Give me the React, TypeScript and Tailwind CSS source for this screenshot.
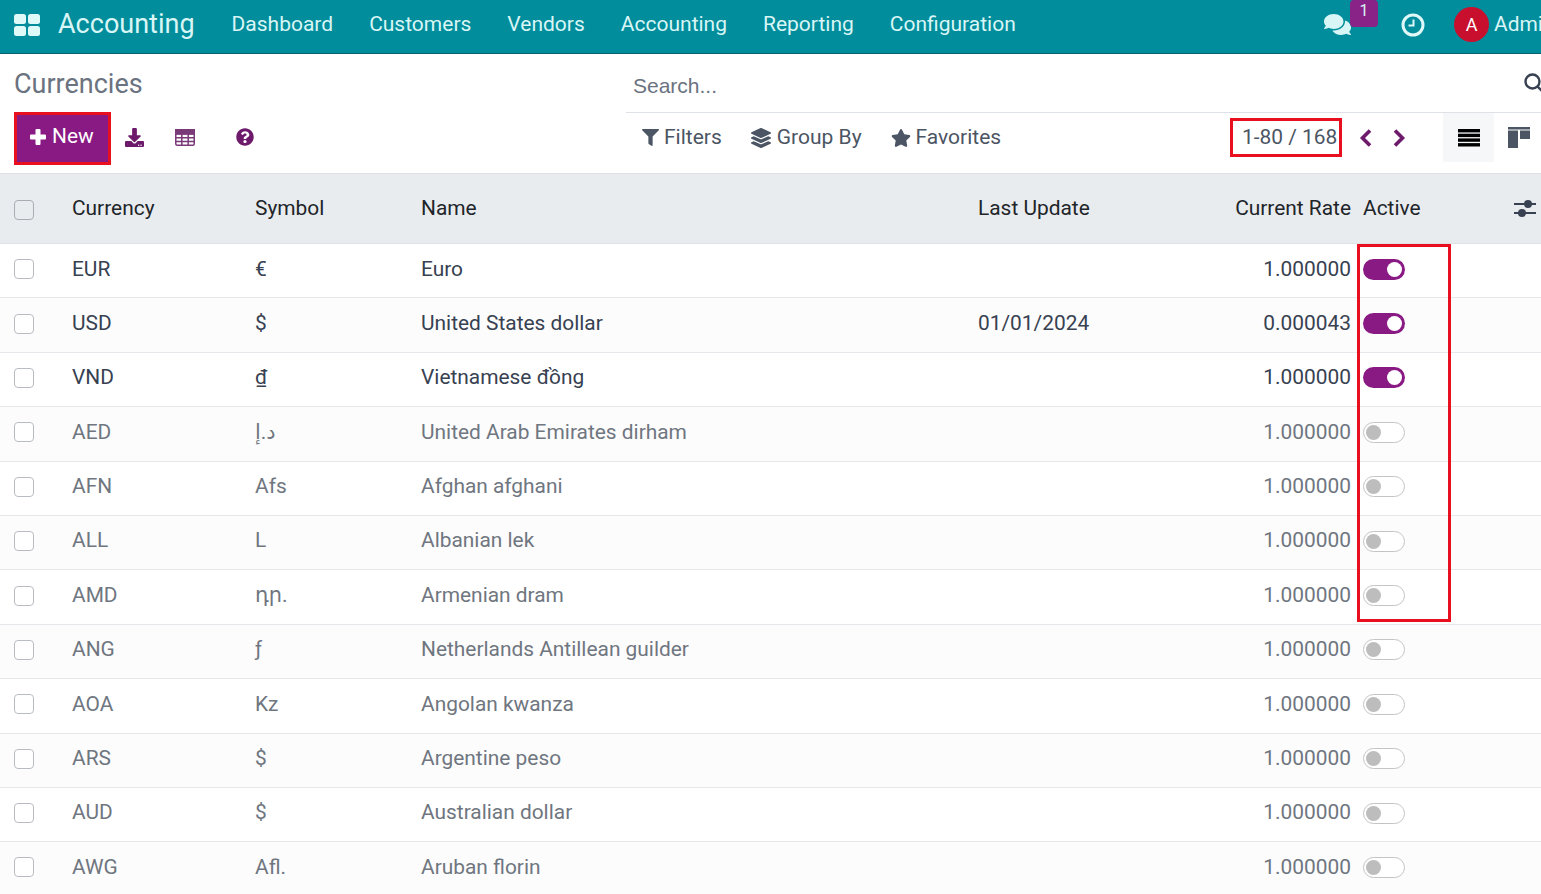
import { FaComments, FaDownload, FaFilter, FaLayerGroup, FaQuestionCircle, FaStar } from 'react-icons/fa'

const currencies = [
  { code: 'EUR', symbol: '€', name: 'Euro', update: '', rate: '1.000000', active: true },
  { code: 'USD', symbol: '$', name: 'United States dollar', update: '01/01/2024', rate: '0.000043', active: true },
  { code: 'VND', symbol: '₫', name: 'Vietnamese đồng', update: '', rate: '1.000000', active: true },
  { code: 'AED', symbol: 'د.إ', name: 'United Arab Emirates dirham', update: '', rate: '1.000000', active: false },
  { code: 'AFN', symbol: 'Afs', name: 'Afghan afghani', update: '', rate: '1.000000', active: false },
  { code: 'ALL', symbol: 'L', name: 'Albanian lek', update: '', rate: '1.000000', active: false },
  { code: 'AMD', symbol: 'դր.', name: 'Armenian dram', update: '', rate: '1.000000', active: false },
  { code: 'ANG', symbol: 'ƒ', name: 'Netherlands Antillean guilder', update: '', rate: '1.000000', active: false },
  { code: 'AOA', symbol: 'Kz', name: 'Angolan kwanza', update: '', rate: '1.000000', active: false },
  { code: 'ARS', symbol: '$', name: 'Argentine peso', update: '', rate: '1.000000', active: false },
  { code: 'AUD', symbol: '$', name: 'Australian dollar', update: '', rate: '1.000000', active: false },
  { code: 'AWG', symbol: 'Afl.', name: 'Aruban florin', update: '', rate: '1.000000', active: false },
]

const menu = ['Dashboard', 'Customers', 'Vendors', 'Accounting', 'Reporting', 'Configuration']

function Toggle({ on }: { on: boolean }) {
  return on ? (
    <div className="mb-[3px] flex h-[21px] w-[42px] items-center justify-end rounded-full bg-[#8a1a83] pr-[3px]">
      <div className="h-[15px] w-[15px] rounded-full bg-white" />
    </div>
  ) : (
    <div className="mb-[3px] flex h-[21px] w-[42px] items-center rounded-full border border-[#c4c4c4] bg-white pl-[2px]">
      <div className="h-[15px] w-[15px] rounded-full bg-[#bdbdbd]" />
    </div>
  )
}

function Navbar() {
  return (
    <div className="flex h-[54px] shrink-0 items-center border-b border-[#0b5f68] bg-[#018d9c] pb-[4px] text-[#d9f6f6]">
      <svg className="ml-[14px] shrink-0" width="26" height="22" viewBox="0 0 26 22" fill="#dff8f8">
        <rect x="0" y="0" width="12" height="10" rx="2.5" />
        <rect x="14" y="0" width="12" height="10" rx="2.5" />
        <rect x="0" y="12" width="12" height="10" rx="2.5" />
        <rect x="14" y="12" width="12" height="10" rx="2.5" />
      </svg>
      <div className="ml-[18px] mr-[37px] text-[27px]">Accounting</div>
      <div className="flex gap-[36px] text-[21px]">
        {menu.map((m) => (
          <div key={m}>{m}</div>
        ))}
      </div>
      <div className="ml-auto flex shrink-0 items-center">
        <div className="relative mr-[50px]">
          <FaComments size={27} />
          <div className="absolute left-[26px] top-[-11px] flex h-[27px] w-[28px] items-start justify-center rounded-[4px] bg-[#8a2387] text-[16px] leading-[22px]">
            1
          </div>
        </div>
        <svg className="mr-[29px]" width="24" height="24" viewBox="0 0 24 24" fill="none" stroke="#dff8f8" strokeWidth="3">
          <circle cx="12" cy="12" r="10" />
          <path d="M12.5 6.5v6h-5" strokeWidth="2" />
        </svg>
        <div className="flex h-[35px] w-[35px] items-center justify-center rounded-full bg-[#c8102e] text-[18px] text-white">A</div>
        <div className="ml-[5px] w-[47px] whitespace-nowrap text-[20.9px]">Admin</div>
      </div>
    </div>
  )
}

function ControlPanel() {
  return (
    <div className="flex h-[120px] shrink-0 border-b border-[#dee2e6] bg-white">
      <div className="w-[626px] shrink-0 pl-[14px]">
        <div className="mt-[13px] text-[27px] leading-[34px] text-[#6b7280]">Currencies</div>
        <div className="mt-[11px] flex items-center text-[#6e1a6b]">
          <div className="flex h-[53px] w-[97px] items-center gap-[6px] border-[3px] border-[#e8101e] bg-[#8a1a83] pb-[3px] pl-[13px] text-[20.9px] text-white">
            <svg width="16" height="16" viewBox="0 0 16 16" fill="#fff">
              <rect x="5.5" y="0" width="5" height="16" rx="1" />
              <rect x="0" y="5.5" width="16" height="5" rx="1" />
            </svg>
            New
          </div>
          <FaDownload className="mb-[3px] ml-[14px]" size={19} />
          <svg className="mb-[3px] ml-[31px]" width="20" height="17" viewBox="0 0 20 17" fill="none" stroke="#7a3a78" strokeWidth="1.5">
            <rect x="0.75" y="0.75" width="18.5" height="15.5" rx="1.5" />
            <path d="M0.75 5h18.5M0.75 8.7h18.5M0.75 12.4h18.5M6.8 5v11M13.2 5v11" />
            <rect x="0.75" y="0.75" width="18.5" height="4" fill="#7a3a78" />
          </svg>
          <FaQuestionCircle className="mb-[3px] ml-[41px]" size={18} />
        </div>
      </div>
      <div className="min-w-0 flex-1">
        <div className="flex h-[59px] items-center justify-between border-b border-[#dee2e6] pl-[7px] pt-[6px]">
          <div className="font-['Liberation_Sans',sans-serif] text-[21px] text-[#6b7280]">Search...</div>
          <svg className="mb-[6px] mr-[-3px]" width="20" height="20" viewBox="0 0 20 20" fill="none" stroke="#374151" strokeWidth="2.4">
            <circle cx="8.5" cy="8.5" r="7" />
            <path d="M13.5 13.5L19 19" />
          </svg>
        </div>
        <div className="flex h-[49px] items-center text-[21px] text-[#4b5563]">
          <div className="flex items-center gap-[29px] pl-[16px]">
            <div className="flex items-center gap-[5px]"><FaFilter size={17} />Filters</div>
            <div className="flex items-center gap-[6px]"><FaLayerGroup size={20} />Group By</div>
            <div className="flex items-center gap-[5px]"><FaStar size={20} />Favorites</div>
          </div>
          <div className="ml-auto flex h-[39px] w-[112px] items-center whitespace-nowrap border-[3px] border-[#e8101e] pl-[9px] text-[20.9px]">1-80 / 168</div>
          <svg className="ml-[17px]" width="13" height="18" viewBox="0 0 13 18" fill="none" stroke="#6e1a6b" strokeWidth="3.6">
            <path d="M11 1.5L3.5 9l7.5 7.5" />
          </svg>
          <svg className="ml-[21px]" width="13" height="18" viewBox="0 0 13 18" fill="none" stroke="#6e1a6b" strokeWidth="3.6">
            <path d="M2 1.5L9.5 9 2 16.5" />
          </svg>
          <div className="ml-[37px] flex h-full w-[51px] items-center justify-center bg-[#f6f7f9]">
            <svg width="22" height="18" viewBox="0 0 22 18" fill="#000">
              <rect y="0" width="22" height="3.4" />
              <rect y="4.7" width="22" height="3.4" />
              <rect y="9.4" width="22" height="3.4" />
              <rect y="14.1" width="22" height="3.4" />
            </svg>
          </div>
          <div className="flex w-[47px] justify-start pl-[14px]">
            <svg width="22" height="21" viewBox="0 0 22 21" fill="#4b5563">
              <rect width="22" height="2.5" />
              <rect y="3.5" width="10" height="17.5" />
              <rect x="12" y="3.5" width="10" height="8.5" />
            </svg>
          </div>
        </div>
      </div>
    </div>
  )
}

function Row({ c, i }: { c: (typeof currencies)[number]; i: number }) {
  return (
    <div className={`grid h-[54.4px] shrink-0 grid-cols-[72px_183px_166px_557px_222px_151px_1fr] items-center border-b border-[#e5e7eb] text-[20.9px] ${c.active ? 'text-[#374151]' : 'text-[#6f7680]'} ${i % 2 === 1 ? 'bg-[#fcfcfc]' : 'bg-white'}`}>
      <div className="pb-[3px] pl-[14px]">
        <div className="h-[20px] w-[20px] rounded-[4px] border border-[#b8bcc2] bg-white" />
      </div>
      <div className="pb-[3px]">{c.code}</div>
      <div className={`pb-[3px] ${c.code === 'VND' ? 'underline' : ''}`}>{c.symbol}</div>
      <div className="pb-[3px]">{c.name}</div>
      <div className="pb-[3px]">{c.update}</div>
      <div className="pb-[3px] text-right">{c.rate}</div>
      <div className="pl-[12px]">
        <Toggle on={c.active} />
      </div>
    </div>
  )
}

export default function App() {
  return (
    <div className="relative flex h-[894px] w-[1541px] flex-col overflow-hidden bg-white font-['Roboto','Noto_Sans','DejaVu_Sans',sans-serif]">
      <Navbar />
      <ControlPanel />
      <div className="grid h-[70px] shrink-0 grid-cols-[72px_183px_166px_557px_222px_151px_1fr] items-center border-b border-[#dee2e6] bg-[#e9ecef] text-[20.9px] text-[#212529]">
        <div className="pl-[14px] pt-[2px]">
          <div className="h-[20px] w-[20px] rounded-[4px] border border-[#a9adb3]" />
        </div>
        <div>Currency</div>
        <div>Symbol</div>
        <div>Name</div>
        <div>Last Update</div>
        <div className="text-right">Current Rate</div>
        <div className="flex items-center justify-between pl-[12px] pr-[5px]">
          Active
          <svg width="22" height="19" viewBox="0 0 22 19" fill="#374151">
            <rect y="4" width="22" height="2" />
            <rect y="13" width="22" height="2" />
            <circle cx="14" cy="5" r="4" />
            <circle cx="8" cy="14" r="4" />
          </svg>
        </div>
      </div>
      {currencies.map((c, i) => (
        <Row key={c.code} c={c} i={i} />
      ))}
      <div className="absolute left-[1357px] top-[244px] h-[378px] w-[94px] border-[3px] border-[#e8101e]" />
    </div>
  )
}
